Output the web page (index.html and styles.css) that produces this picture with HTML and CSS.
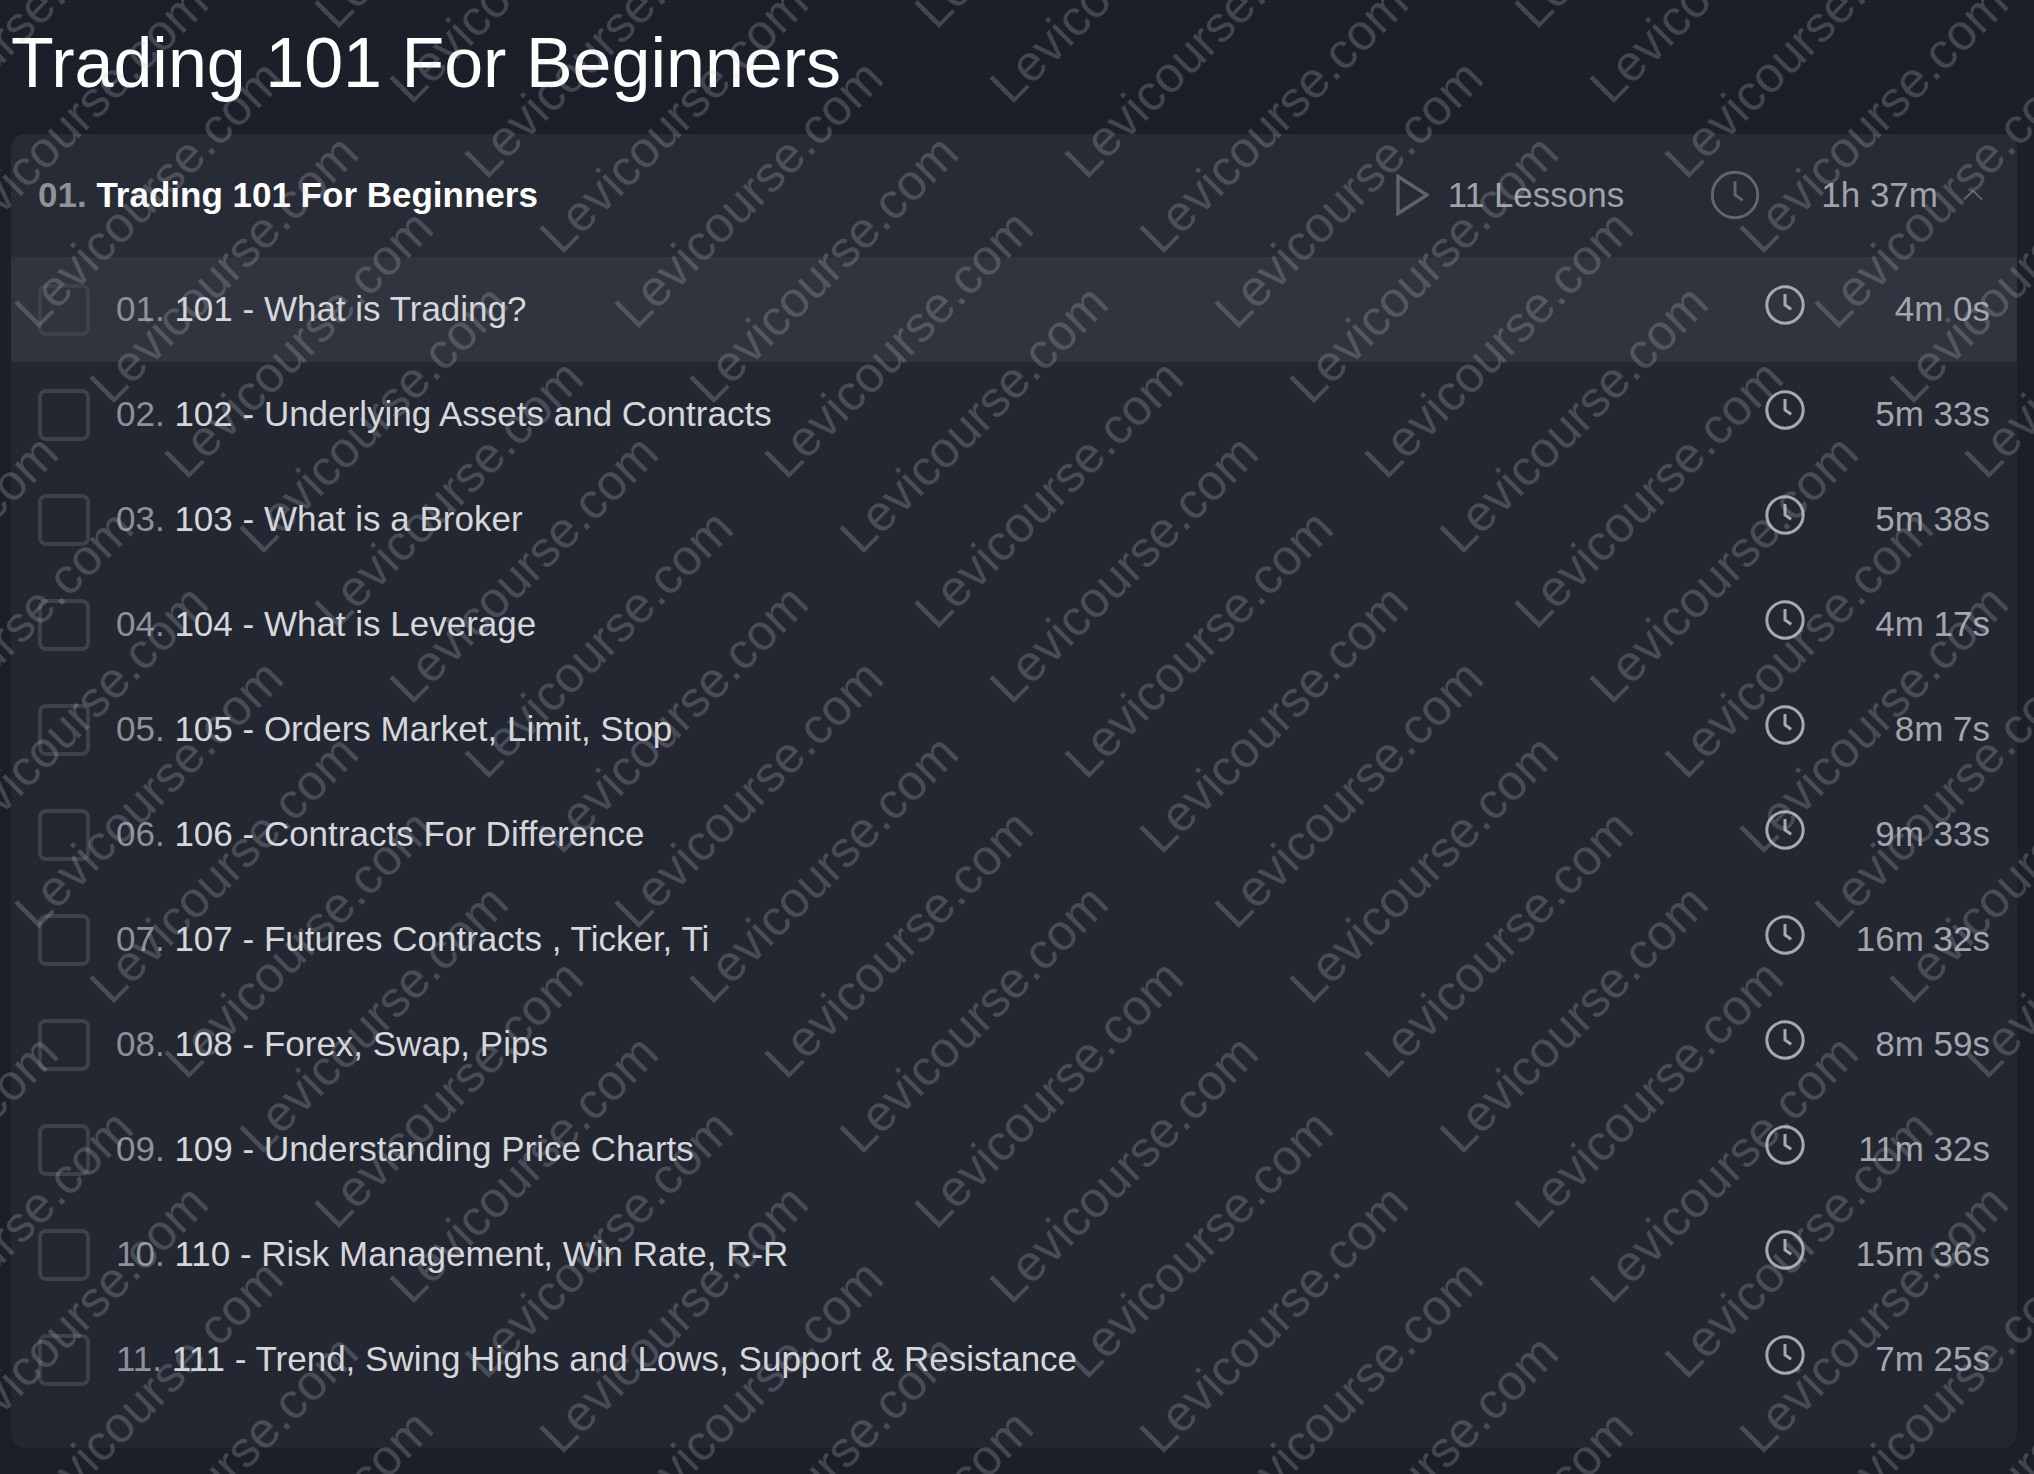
FILE: index.html
```
<!DOCTYPE html>
<html lang="en">
<head>
<meta charset="utf-8">
<title>Trading 101 For Beginners</title>
<link rel="stylesheet" href="styles.css">
</head>
<body>
<svg class="defs" width="0" height="0" aria-hidden="true">
  <symbol id="clock" viewBox="0 0 24 24"><circle cx="12" cy="12" r="10.9"/><path d="M12 5.4V12l3.7 2.6"/></symbol>
</svg>
<main class="page">
  <h1 class="title">Trading 101 For Beginners</h1>
  <section class="card">
    <header class="head">
      <div class="head-title"><span class="head-num">01.</span> Trading 101 For Beginners</div>
      <svg class="play" viewBox="0 0 33 42"><path d="M2 2.5 31 21 2 39.5Z"/></svg>
      <span class="head-count">11 Lessons</span>
      <svg class="head-clock"><use href="#clock"/></svg>
      <span class="head-time">1h 37m</span>
      <svg class="chev" viewBox="0 0 20 10"><path d="M1 9.5 10 .8l9 8.7"/></svg>
    </header>
    <ul class="rows">
      <li class="row active"><span class="box"></span><span class="name"><span class="num">01.</span> 101 - What is Trading?</span><svg class="clock"><use href="#clock"/></svg><span class="time">4m 0s</span></li>
      <li class="row"><span class="box"></span><span class="name"><span class="num">02.</span> 102 - Underlying Assets and Contracts</span><svg class="clock"><use href="#clock"/></svg><span class="time">5m 33s</span></li>
      <li class="row"><span class="box"></span><span class="name"><span class="num">03.</span> 103 - What is a Broker</span><svg class="clock"><use href="#clock"/></svg><span class="time">5m 38s</span></li>
      <li class="row"><span class="box"></span><span class="name"><span class="num">04.</span> 104 - What is Leverage</span><svg class="clock"><use href="#clock"/></svg><span class="time">4m 17s</span></li>
      <li class="row"><span class="box"></span><span class="name"><span class="num">05.</span> 105 - Orders Market, Limit, Stop</span><svg class="clock"><use href="#clock"/></svg><span class="time">8m 7s</span></li>
      <li class="row"><span class="box"></span><span class="name"><span class="num">06.</span> 106 - Contracts For Difference</span><svg class="clock"><use href="#clock"/></svg><span class="time">9m 33s</span></li>
      <li class="row"><span class="box"></span><span class="name"><span class="num">07.</span> 107 - Futures Contracts , Ticker, Ti</span><svg class="clock"><use href="#clock"/></svg><span class="time">16m 32s</span></li>
      <li class="row"><span class="box"></span><span class="name"><span class="num">08.</span> 108 - Forex, Swap, Pips</span><svg class="clock"><use href="#clock"/></svg><span class="time">8m 59s</span></li>
      <li class="row"><span class="box"></span><span class="name"><span class="num">09.</span> 109 - Understanding Price Charts</span><svg class="clock"><use href="#clock"/></svg><span class="time">11m 32s</span></li>
      <li class="row"><span class="box"></span><span class="name"><span class="num">10.</span> 110 - Risk Management, Win Rate, R-R</span><svg class="clock"><use href="#clock"/></svg><span class="time">15m 36s</span></li>
      <li class="row"><span class="box"></span><span class="name"><span class="num">11.</span> 111 - Trend, Swing Highs and Lows, Support &amp; Resistance</span><svg class="clock"><use href="#clock"/></svg><span class="time">7m 25s</span></li>
    </ul>
  </section>
</main>
<svg class="watermark" width="2034" height="1474" aria-hidden="true">
  <defs>
    <text id="w" class="wm-text" transform="rotate(-45)">Levicourse.com</text>
    <g id="d4">
      <use href="#w"/>
      <use href="#w" x="75" y="75"/>
      <use href="#w" x="150" y="150"/>
      <use href="#w" x="225" y="225"/>
    </g>
    <g id="line">
      <use href="#d4"/>
      <use href="#d4" x="300" y="300"/>
      <use href="#d4" x="600" y="600"/>
      <use href="#d4" x="900" y="900"/>
      <use href="#d4" x="1200" y="1200"/>
      <use href="#d4" x="1500" y="1500"/>
    </g>
  </defs>
  <use href="#line" x="-1539" y="-44"/>
  <use href="#line" x="-939" y="-44"/>
  <use href="#line" x="-339" y="-44"/>
  <use href="#line" x="261" y="-44"/>
  <use href="#line" x="861" y="-44"/>
  <use href="#line" x="1461" y="-44"/>
</svg>
</body>
</html>
```
FILE: styles.css
```
* { box-sizing: border-box; }
html, body { margin: 0; padding: 0; }
body {
  position: relative;
  width: 2034px;
  height: 1474px;
  overflow: hidden;
  background-color: #1a1e29;
  background-image: radial-gradient(rgba(255,255,255,.012) 1px, transparent 1px);
  background-size: 4px 4px;
  font-family: "Liberation Sans", Arial, sans-serif;
  font-size: 35px;
  color: #d6d7da;
}
.defs { position: absolute; }
.page { padding: 0 17px 0 11px; }
.title {
  margin: 0 0 30px;
  padding-top: 23px;
  padding-bottom: 1px;
  font-size: 70px;
  line-height: 80px;
  font-weight: 400;
  color: #fff;
}
.card {
  height: 1314px;
  border-radius: 15px;
  overflow: hidden;
  background: #232732;
}
.head {
  display: flex;
  align-items: center;
  height: 123px;
  padding: 0 34px 2px 27px;
  background: #272b35;
  line-height: 40px;
}
.head-title { flex: 1; font-weight: 700; color: #fff; }
.head-num { color: #8e9197; }
.play { width: 33px; height: 42px; margin-right: 19px; fill: none; stroke: #5f626b; stroke-width: 3.5; }
.head-count { color: #a0a2a8; margin-right: 86px; }
.head-clock { width: 50px; height: 50px; margin-right: 61px; fill: none; stroke: #62656e; stroke-width: 1.4; }
.head-time { color: #a0a2a8; margin-right: 25px; }
.chev { width: 20px; height: 10px; fill: none; stroke: #6a6d76; stroke-width: 1.6; }
.rows { list-style: none; margin: 0; padding: 0; }
.row {
  display: flex;
  align-items: center;
  height: 105px;
  padding: 0 27px 0 27px;
  line-height: 40px;
}
.row.active { background: #30343f; }
.box {
  flex: none;
  width: 52px;
  height: 52px;
  margin-right: 26px;
  border: 4px solid #3d414c;
  border-radius: 8px;
}
.name { flex: 1; padding-bottom: 2px; color: #d6d7da; }
.num { color: #8e9197; }
.clock {
  flex: none;
  width: 40px;
  height: 40px;
  margin-bottom: 10px;
  fill: none;
  stroke: #a8a9ad;
  stroke-width: 1.8;
}
.time { flex: none; width: 185px; padding-bottom: 2px; text-align: right; color: #a3a5aa; }
.watermark { position: absolute; left: 0; top: 0; pointer-events: none; }
.wm-text {
  font-family: "Liberation Sans", Arial, sans-serif;
  font-size: 50.5px;
  fill: rgba(200, 200, 208, .23);
}
```
